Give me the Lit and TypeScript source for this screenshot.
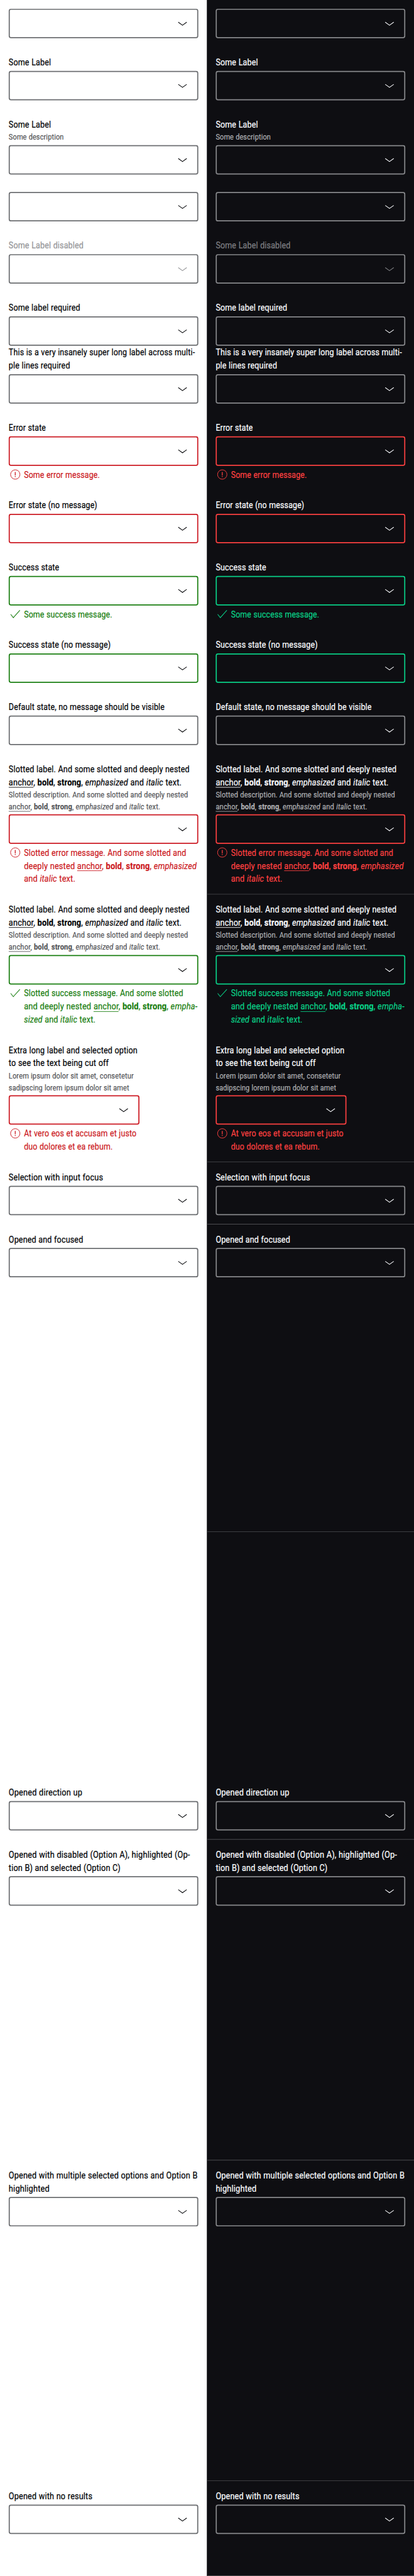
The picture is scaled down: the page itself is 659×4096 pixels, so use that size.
import { LitElement, html, css, svg, nothing, TemplateResult } from "lit";
import { customElement, property } from "lit/decorators.js";

type State = "none" | "error" | "success";
type Line = [TemplateResult | string, number];
interface Field {
  label?: Line[];
  desc?: Line[];
  msg?: Line[];
  state?: State;
  disabled?: boolean;
  narrow?: boolean;
  flush?: boolean;
  rule?: boolean;
  before?: number;
  after?: number;
}

const rich = (lead: string, first: string, tail: TemplateResult | string) =>
  html`${lead}<u>anchor</u>, <b>bold</b>, <b>strong</b>, ${first ? html`<i>${first}</i>` : nothing}${tail}`;
const end = html` and <i>italic</i> text.`;

const slottedLabel: Line[] = [
  ["Slotted label. And some slotted and deeply nested", 332],
  [rich("", "emphasized", end), 317],
];
const slottedDesc: Line[] = [
  ["Slotted description. And some slotted and deeply nested", 329.5],
  [rich("", "emphasized", end), 278.5],
];

const fields: Field[] = [
  {},
  { label: [["Some Label", 77.5]] },
  { label: [["Some Label", 77.5]], desc: [["Some description", 101.5]] },
  {},
  { label: [["Some Label disabled", 137]], disabled: true },
  { label: [["Some label required", 131.5]], flush: true },
  { label: [["This is a very insanely super long label across multi-", 341.5], ["ple lines required", 112.5]] },
  { label: [["Error state", 68.5]], state: "error", msg: [["Some error message.", 139.5]] },
  { label: [["Error state (no message)", 162.5]], state: "error" },
  { label: [["Success state", 93]], state: "success", msg: [["Some success message.", 162]] },
  { label: [["Success state (no message)", 187]], state: "success" },
  { label: [["Default state, no message should be visible", 286]] },
  {
    label: slottedLabel,
    desc: slottedDesc,
    state: "error",
    msg: [
      ["Slotted error message. And some slotted and", 298],
      [rich("deeply nested ", "emphasized", ""), 317.5],
      [html`and <i>italic</i> text.`, 94],
    ],
  },
  {
    rule: true,
    label: slottedLabel,
    desc: slottedDesc,
    state: "success",
    msg: [
      ["Slotted success message. And some slotted", 292.5],
      [rich("and deeply nested ", "empha-", ""), 318],
      [html`<i>sized</i> and <i>italic</i> text.`, 131],
    ],
  },
  {
    narrow: true,
    state: "error",
    label: [["Extra long label and selected option", 236], ["to see the text being cut off", 183.5]],
    desc: [["Lorem ipsum dolor sit amet, consetetur", 229], ["sadipscing lorem ipsum dolor sit amet", 221]],
    msg: [["At vero eos et accusam et justo", 207], ["duo dolores et ea rebum.", 163]],
  },
  { rule: true, label: [["Selection with input focus", 173.5]] },
  { rule: true, label: [["Opened and focused", 136.5]], after: 450 },
  { rule: true, label: [["Opened direction up", 135]], before: 450 },
  {
    rule: true,
    label: [["Opened with disabled (Option A), highlighted (Op-", 333], ["tion B) and selected (Option C)", 205]],
    after: 450,
  },
  {
    rule: true,
    label: [["Opened with multiple selected options and Option B", 346.5], ["highlighted", 75]],
    after: 450,
  },
  { rule: true, label: [["Opened with no results", 153.5]] },
];

/** One line of text, condensed horizontally so that it spans a given width. */
@customElement("fit-line")
class FitLine extends LitElement {
  @property({ attribute: false }) content: TemplateResult | string = "";
  @property({ type: Number }) span = 0;

  static styles = css`
    :host { display: block; white-space: nowrap; }
    .run {
      display: inline-block;
      transform-origin: 0 0;
      letter-spacing: 0.2px;
      word-spacing: 0.3px;
      -webkit-text-stroke: 0.25px currentColor;
    }
    u { text-decoration-thickness: 1px; text-underline-offset: 3px; }
    b { font-weight: 700; }
    i { font-style: italic; }
  `;

  async firstUpdated() {
    await document.fonts.ready;
    const run = this.renderRoot.querySelector(".run") as HTMLElement;
    if (run.offsetWidth) run.style.transform = `translateY(1px) scaleX(${this.span / run.offsetWidth})`;
  }

  render() {
    return html`<span class="run">${this.content}</span>`;
  }
}

@customElement("select-field")
class SelectField extends LitElement {
  @property({ attribute: false }) field: Field = {};

  static styles = css`
    :host { display: block; }
    .field { display: flex; flex-direction: column; }
    .narrow { width: 240px; }
    .label { font-size: 16px; line-height: 24px; color: var(--ink); }
    .desc { font-size: 14px; line-height: 21.75px; color: var(--soft); }
    .box {
      box-sizing: border-box;
      height: 54px;
      border: 2px solid var(--line);
      border-radius: 4px;
      display: flex;
      align-items: center;
      justify-content: flex-end;
      padding-right: 15px;
      color: var(--ink);
    }
    .gap { margin-top: 4px; }
    .error .box { border-color: var(--error); }
    .success .box { border-color: var(--success); }
    .disabled .label, .disabled .box { color: var(--off); }
    .msg { display: flex; gap: 4px; margin-top: 4px; font-size: 16px; line-height: 24px; }
    .error .msg { color: var(--error); }
    .success .msg { color: var(--success); }
    svg { display: block; width: 24px; height: 24px; flex: none; fill: none; stroke: currentColor; }
  `;

  render() {
    const f = this.field;
    const lines = (l: Line[]) => l.map(([c, w]) => html`<fit-line .content=${c} .span=${w}></fit-line>`);
    const icon =
      f.state === "error"
        ? svg`<circle cx="12" cy="12" r="8.6" stroke-width="1.1"/><path d="M12 7.4V13.6" stroke-width="1.5"/><path d="M12 15V16.6" stroke-width="1.5"/>`
        : svg`<path d="M3.6 12.3L8.4 18.4L20.5 4.9" stroke-width="1.2"/>`;
    return html`
      <div class="field ${f.state ?? "none"} ${f.disabled ? "disabled" : ""} ${f.narrow ? "narrow" : ""}">
        ${f.label ? html`<div class="label">${lines(f.label)}</div>` : nothing}
        ${f.desc ? html`<div class="desc">${lines(f.desc)}</div>` : nothing}
        <div class="box ${f.label ? "gap" : ""}">
          <svg viewBox="0 0 24 24"><path d="M4.2 9.6L12 15.2L19.8 9.6" stroke-width="1.2" /></svg>
        </div>
        ${f.msg ? html`<div class="msg"><svg viewBox="0 0 24 24">${icon}</svg><div>${lines(f.msg)}</div></div>` : nothing}
      </div>
    `;
  }
}

@customElement("app-root")
class AppRoot extends LitElement {
  static styles = css`
    :host { display: block; width: 659px; height: 4096px; overflow: hidden; background: #0e0e12; }
    .page {
      width: 760px;
      height: 4723px;
      transform: scale(0.86711, 0.86725);
      transform-origin: 0 0;
      display: grid;
      grid-template-columns: 380px 380px;
      font-family: Roboto, "Liberation Sans", sans-serif;
    }
    .light {
      --ink: #010205; --soft: #535457; --line: #6b6d70; --off: #949598;
      --error: #cc1922; --success: #197e10;
      background: #fff;
    }
    .dark {
      --ink: #fbfcff; --soft: #afb0b3; --line: #88898c; --off: #7e7f82;
      --error: #fc4040; --success: #09d087;
      background: #0e0e12;
      box-shadow: inset 0 -1px #57585b;
    }
    .cell { padding: 16px; }
    .flush { padding-bottom: 0; }
    .flush + .cell { padding-top: 0; }
    .dark .rule { box-shadow: inset 0 1px #4c4d51; }
    .room { height: 450px; }
  `;

  render() {
    const cells = fields.map(
      (f) => html`<div class="cell ${f.flush ? "flush" : ""} ${f.rule ? "rule" : ""}">
        ${f.before ? html`<div class="room"></div>` : nothing}
        <select-field .field=${f}></select-field>
        ${f.after ? html`<div class="room"></div>` : nothing}
      </div>`
    );
    return html`<main class="page">
      <section class="light">${cells}</section>
      <section class="dark">${cells}</section>
    </main>`;
  }
}
